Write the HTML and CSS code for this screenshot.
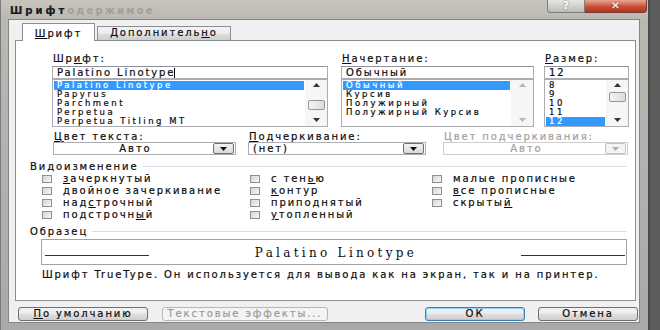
FILE: index.html
```html
<!DOCTYPE html>
<html lang="ru">
<head>
  <meta charset="UTF-8" />
  <title>Шрифт</title>
  <link rel="stylesheet" href="styles.css">
</head>
<body>
  <div class="window">
    <div class="titlebar">
      <span class="title">Шрифт</span><span class="ghost">одержимое</span>
      <div class="caption">
        <span class="help">?</span>
        <span class="close">✕</span>
      </div>
    </div>

    <div class="client">
      <div class="tabs">
        <div class="tab active"><u>Ш</u>рифт</div>
        <div class="tab wide">Дополнитель<u>н</u>о</div>
      </div>

      <div class="panel">
        <div class="pickers">
          <div class="picker font">
            <label>Шр<u>и</u>фт:</label>
            <div class="field">Palatino Linotype<span class="caret"></span></div>
            <div class="list">
              <ul class="items">
                <li class="sel">Palatino Linotype</li>
                <li>Papyrus</li>
                <li>Parchment</li>
                <li>Perpetua</li>
                <li>Perpetua Titling MT</li>
              </ul>
              <div class="scroll">
                <svg class="arr" viewBox="0 0 7 4"><polygon points="0,4 3.5,0 7,4" /></svg>
                <span class="thumb t-font"></span>
                <svg class="arr down" viewBox="0 0 7 4"><polygon points="0,0 7,0 3.5,4" /></svg>
              </div>
            </div>
          </div>

          <div class="picker style">
            <label><u>Н</u>ачертание:</label>
            <div class="field">Обычный</div>
            <div class="list">
              <ul class="items">
                <li class="sel">Обычный</li>
                <li>Курсив</li>
                <li>Полужирный</li>
                <li>Полужирный Курсив</li>
              </ul>
              <div class="scroll off">
                <svg class="arr" viewBox="0 0 7 4"><polygon points="0,4 3.5,0 7,4" /></svg>
                <svg class="arr down" viewBox="0 0 7 4"><polygon points="0,0 7,0 3.5,4" /></svg>
              </div>
            </div>
          </div>

          <div class="picker size">
            <label><u>Р</u>азмер:</label>
            <div class="field">12</div>
            <div class="list">
              <ul class="items">
                <li>8</li>
                <li>9</li>
                <li>10</li>
                <li>11</li>
                <li class="sel">12</li>
              </ul>
              <div class="scroll">
                <svg class="arr" viewBox="0 0 7 4"><polygon points="0,4 3.5,0 7,4" /></svg>
                <span class="thumb t-size"></span>
                <svg class="arr down" viewBox="0 0 7 4"><polygon points="0,0 7,0 3.5,4" /></svg>
              </div>
            </div>
          </div>
        </div>

        <div class="combos">
          <div class="combo-col c1">
            <label><u>Ц</u>вет текста:</label>
            <div class="combo">
              <span class="value center">Авто</span>
              <span class="drop"><svg viewBox="0 0 7 4"><polygon points="0,0 7,0 3.5,4" /></svg></span>
            </div>
          </div>
          <div class="combo-col c2">
            <label><u>П</u>одчеркивание:</label>
            <div class="combo">
              <span class="value">(нет)</span>
              <span class="drop"><svg viewBox="0 0 7 4"><polygon points="0,0 7,0 3.5,4" /></svg></span>
            </div>
          </div>
          <div class="combo-col c3 disabled">
            <label>Цвет подчеркивания:</label>
            <div class="combo">
              <span class="value center">Авто</span>
              <span class="drop"><svg viewBox="0 0 7 4"><polygon points="0,0 7,0 3.5,4" /></svg></span>
            </div>
          </div>
        </div>

        <div class="group"><span>Видоизменение</span><span class="rule"></span></div>

        <div class="effects">
          <div class="check"><span class="box"></span><u>з</u>ачеркнутый</div>
          <div class="check"><span class="box"></span>двойное зачеркивание</div>
          <div class="check"><span class="box"></span>над<u>с</u>трочный</div>
          <div class="check"><span class="box"></span>подстрочн<u>ы</u>й</div>
          <div class="check"><span class="box"></span>с тен<u>ь</u>ю</div>
          <div class="check"><span class="box"></span><u>к</u>онтур</div>
          <div class="check"><span class="box"></span>приподнятый</div>
          <div class="check"><span class="box"></span><u>у</u>топленный</div>
          <div class="check"><span class="box"></span>малые прописные</div>
          <div class="check"><span class="box"></span><u>в</u>се прописные</div>
          <div class="check"><span class="box"></span>скрыты<u>й</u></div>
        </div>

        <div class="group sample-title"><span>Образец</span><span class="rule"></span></div>

        <div class="sample">
          <span class="base"></span>
          <span class="preview">Palatino Linotype</span>
          <span class="base right"></span>
        </div>

        <div class="note">Шрифт TrueType. Он используется для вывода как на экран, так и на принтер.</div>
      </div>

      <div class="buttons">
        <div class="btn b-default"><u>П</u>о умолчанию</div>
        <div class="btn b-effects disabled">Текстовые эффекты...</div>
        <div class="btn b-ok">ОК</div>
        <div class="btn b-cancel">Отмена</div>
      </div>
    </div>
  </div>
</body>
</html>
```

FILE: styles.css
```css
* {
  box-sizing: border-box;
}
body {
  margin: 0;
  width: 660px;
  height: 330px;
  overflow: hidden;
  background: linear-gradient(90deg, #3e3e3e, #5c5c5c);
  font-family: "DejaVu Sans", sans-serif;
  font-size: 10px;
  letter-spacing: 1.9px;
  color: #0c0c0c;
  -webkit-text-stroke: 0.2px currentColor;
}
u {
  text-underline-offset: 1px;
}

/* window frame */
.window {
  width: 650px;
  height: 330px;
  background: linear-gradient(180deg, #c8c5bd 0, #bab8b2 20px, #a9a9a9 100%);
  border-left: 1px solid #7a7a7a;
  border-right: 2px solid #4a4a4a;
}
.titlebar {
  height: 19px;
  display: flex;
  align-items: flex-start;
}
.title {
  font-weight: bold;
  font-size: 10px;
  letter-spacing: 3px;
  line-height: 10px;
  margin: 6px 0 0 9px;
  color: #1a1a1a;
}
.ghost {
  font-weight: bold;
  font-size: 10px;
  letter-spacing: 2.2px;
  line-height: 10px;
  margin-top: 6px;
  color: #a3a099;
  -webkit-text-stroke: 0;
}
.caption {
  margin-left: auto;
  margin-right: 1px;
  display: flex;
}
.help {
  width: 38px;
  height: 13px;
  border: 1px solid #7b7b7b;
  border-top: none;
  border-radius: 0 0 0 4px;
  background: linear-gradient(#e6e6e4, #bdbcb8);
  color: #fff;
  font-weight: bold;
  text-align: center;
  line-height: 12px;
  letter-spacing: 0;
  text-shadow: 0 0 2px #555;
}
.close {
  width: 62px;
  height: 13px;
  border: 1px solid #7a3b30;
  border-top: none;
  border-left: none;
  border-radius: 0 0 4px 0;
  background: linear-gradient(#e9a595, #c9503a 55%, #b5331d);
  color: #fff;
  font-weight: bold;
  text-align: center;
  line-height: 12px;
  letter-spacing: 0;
  text-shadow: 0 0 2px #5a1a10;
}

/* dialog body */
.client {
  margin-left: 7px;
  width: 632px;
  height: 304px;
  padding-top: 3px;
  background: #f0f0f0;
  border: 1px solid #858585;
}
.tabs {
  display: flex;
  align-items: flex-end;
  height: 17px;
  padding-left: 13px;
}
.tab {
  height: 14px;
  line-height: 12px;
  text-align: center;
  border: 1px solid #8c8e94;
  border-bottom: none;
  background: linear-gradient(#f2f2f2, #ebebeb 50%, #dddddd 51%, #cfcfcf);
}
.tab.active {
  width: 73px;
  height: 18px;
  padding-top: 4px;
  margin-bottom: -1px;
  position: relative;
  z-index: 1;
  background: #fff;
}
.tab.wide {
  width: 134px;
  margin-left: 2px;
}
.panel {
  margin-left: 6px;
  width: 621px;
  height: 261px;
  background: #fff;
  border: 1px solid #8c8e94;
}

/* font / style / size pickers */
.pickers {
  display: flex;
  margin: 12px 0 0 36px;
}
.picker label,
.combo-col label {
  display: block;
  line-height: 11px;
  padding-left: 1px;
  margin-bottom: 2px;
}
.picker.font {
  width: 276px;
}
.picker.style {
  width: 193px;
  margin-left: 13px;
}
.picker.size {
  width: 85px;
  margin-left: 10px;
}
.field {
  height: 13px;
  line-height: 11px;
  padding-left: 4px;
  border: 1px solid #abadb3;
  border-top-color: #8e9199;
  background: #fff;
  white-space: nowrap;
}
.caret {
  display: inline-block;
  width: 1px;
  height: 10px;
  margin-left: -1px;
  vertical-align: -2px;
  background: #000;
}
.list {
  display: flex;
  height: 48px;
  border: 1px solid #abadb3;
  background: #fff;
}
.items {
  flex: 1;
  margin: 0;
  padding: 1px 1px 0 1px;
  list-style: none;
  overflow: hidden;
}
.items li {
  height: 9px;
  line-height: 9px;
  padding-left: 3px;
  font-size: 8.5px;
  letter-spacing: 2.5px;
  white-space: nowrap;
}
.items li.sel {
  background: #3399ff;
  color: #fff;
}
.scroll {
  width: 22px;
  display: flex;
  flex-direction: column;
  align-items: center;
  padding: 3px 0 4px;
  background: #f6f6f6;
}
.arr {
  width: 7px;
  height: 4px;
  fill: #333;
}
.arr.down {
  margin-top: auto;
}
.scroll.off .arr {
  fill: #b5b5b5;
}
.thumb {
  width: 17px;
  height: 10px;
  border: 1px solid #979797;
  border-radius: 2px;
  background: linear-gradient(90deg, #f4f4f4, #dcdcdc);
}
.t-font {
  margin-top: 13px;
}
.t-size {
  margin-top: 5px;
}

/* colour / underline combos */
.combos {
  display: flex;
  margin: 4px 0 0 37px;
}
.combo-col.c1 {
  width: 183px;
}
.combo-col.c2 {
  width: 178px;
  margin-left: 12px;
}
.combo-col.c3 {
  width: 185px;
  margin-left: 17px;
}
.combo-col label {
  margin-bottom: 0;
}
.combo {
  display: flex;
  height: 13px;
  border: 1px solid #abadb3;
  background: #fff;
}
.value {
  flex: 1;
  line-height: 11px;
  padding-left: 4px;
}
.value.center {
  text-align: center;
}
.drop {
  width: 21px;
  height: 11px;
  margin-right: 1px;
  display: flex;
  align-items: center;
  justify-content: center;
  border: 1px solid #707070;
  border-radius: 2px;
  background: linear-gradient(#f3f3f3, #dadada);
}
.drop svg {
  width: 7px;
  height: 4px;
  fill: #111;
}
.disabled {
  color: #a0a0a0;
}
.disabled .combo {
  border-color: #cdcdcd;
}
.disabled .drop {
  border-color: #c3c3c3;
  background: #f4f4f4;
}
.disabled .drop svg {
  fill: #b0b0b0;
}

/* group captions */
.group {
  display: flex;
  align-items: center;
  height: 11px;
  line-height: 11px;
  margin: 6px 8px 0 14px;
}
.rule {
  flex: 1;
  margin-left: 4px;
  border-top: 1px solid #d5dfe5;
}
.sample-title {
  margin-top: 5px;
}

/* effect checkboxes */
.effects {
  display: grid;
  grid-template-columns: 208px 182px 1fr;
  grid-template-rows: repeat(4, 12px);
  grid-auto-flow: column;
  margin: 1px 0 0 26px;
}
.check {
  display: flex;
  align-items: center;
  line-height: 12px;
  white-space: nowrap;
}
.box {
  width: 10px;
  height: 8px;
  margin-right: 11px;
  border: 1px solid #8e8f8f;
  background: linear-gradient(135deg, #d6d6d6, #f6f6f6);
}

/* preview */
.sample {
  display: flex;
  align-items: flex-end;
  justify-content: space-between;
  height: 26px;
  margin: 2px 8px 0 25px;
  padding: 0 1px 8px 3px;
  border: 1px solid #a3a3a3;
}
.base {
  width: 104px;
  height: 1px;
  background: #333;
}
.preview {
  font-family: "DejaVu Serif", serif;
  font-size: 12px;
  letter-spacing: 3.3px;
  line-height: 13px;
  margin-bottom: -4px;
  margin-left: 2px;
  -webkit-text-stroke: 0;
}
.note {
  margin: 4px 0 0 26px;
  line-height: 11px;
  white-space: nowrap;
}

/* bottom buttons */
.buttons {
  display: flex;
  margin-top: 6px;
  padding: 0 1px 0 9px;
}
.btn {
  height: 14px;
  line-height: 12px;
  text-align: center;
  border: 1px solid #707070;
  border-radius: 3px;
  background: linear-gradient(#f2f2f2, #ebebeb 45%, #dddddd 55%, #cfcfcf);
}
.b-default {
  width: 130px;
}
.b-effects {
  width: 166px;
  margin-left: 14px;
}
.btn.disabled {
  border-color: #b5b8ba;
  background: #f4f4f4;
  color: #9a9a9a;
}
.b-ok {
  width: 100px;
  margin-left: auto;
  border-color: #3c7fb1;
  box-shadow: inset 0 0 0 1px #8fd2f3;
}
.b-cancel {
  width: 100px;
  margin-left: 13px;
}
```
